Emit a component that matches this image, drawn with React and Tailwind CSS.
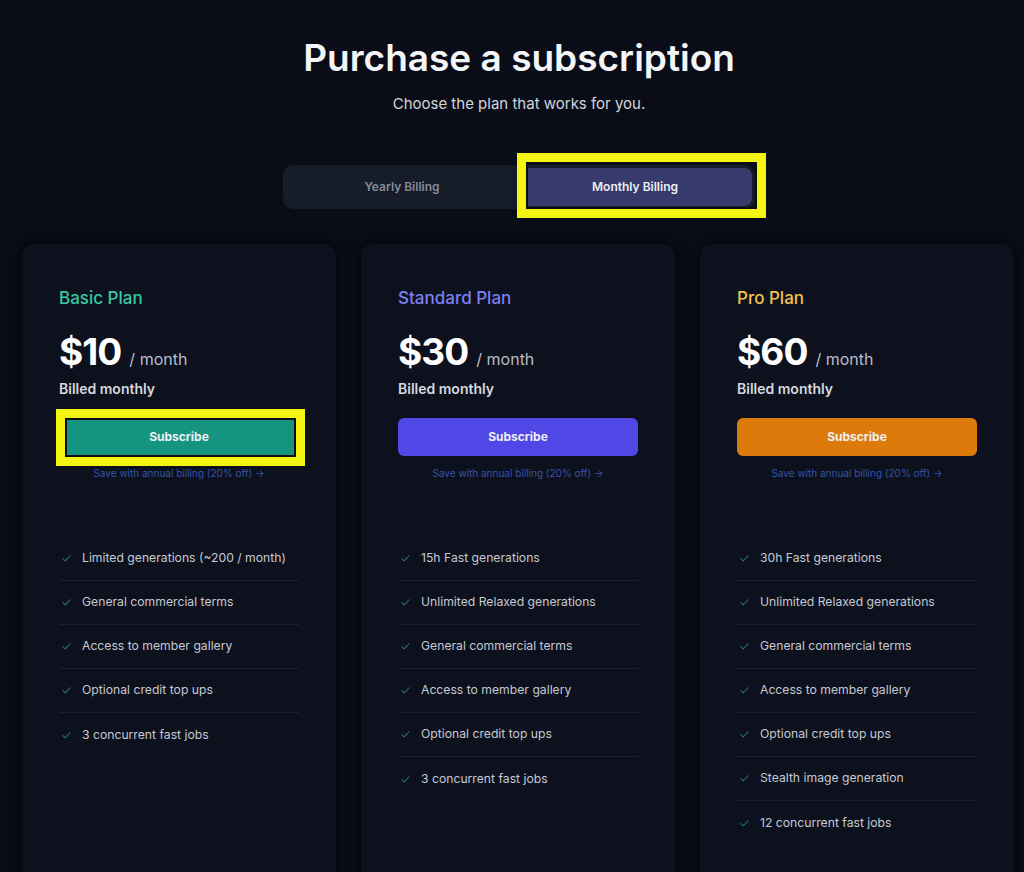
import { Check } from 'lucide-react';

const plans = [
  {
    name: 'Basic Plan',
    price: '$10',
    nameColor: 'text-[#36c9a3]',
    button: 'bg-[#15957f]',
    highlight: true,
    features: [
      'Limited generations (~200 / month)',
      'General commercial terms',
      'Access to member gallery',
      'Optional credit top ups',
      '3 concurrent fast jobs',
    ],
  },
  {
    name: 'Standard Plan',
    price: '$30',
    nameColor: 'text-[#7f7ff2]',
    button: 'bg-[#5146e6]',
    features: [
      '15h Fast generations',
      'Unlimited Relaxed generations',
      'General commercial terms',
      'Access to member gallery',
      'Optional credit top ups',
      '3 concurrent fast jobs',
    ],
  },
  {
    name: 'Pro Plan',
    price: '$60',
    nameColor: 'text-[#f3c24a]',
    button: 'bg-[#dc7b0b]',
    features: [
      '30h Fast generations',
      'Unlimited Relaxed generations',
      'General commercial terms',
      'Access to member gallery',
      'Optional credit top ups',
      'Stealth image generation',
      '12 concurrent fast jobs',
    ],
  },
];

// yellow annotation frame drawn over the screenshot
const Marker = ({ className }) => (
  <div
    className={`pointer-events-none absolute border-[9px] border-[#f4f412] shadow-[inset_0_0_0_2px_#0b0d10] ${className}`}
  />
);

function PlanCard({ plan }) {
  return (
    <div className="w-[314px] h-[640px] flex-shrink-0 rounded-xl bg-[#0d111e] shadow-[0_0_14px_rgba(0,0,0,0.7)] px-[37px] pt-[42px]">
      <p className={`text-[17px] leading-6 font-medium ${plan.nameColor}`}>{plan.name}</p>

      <div className="mt-[22px] flex items-baseline gap-2">
        <span className="text-[37px] leading-[40px] font-bold text-white tracking-tight">{plan.price}</span>
        <span className="text-[16px] text-[#b9bcc8]">/ month</span>
      </div>

      <p className="mt-[7px] text-[14px] leading-5 font-semibold text-[#d6d8df]">Billed monthly</p>

      <div className="relative mt-[19px]">
        <button
          className={`w-full h-[38px] rounded-md text-[12px] font-bold text-[#eef0f4] ${plan.button}`}
        >
          Subscribe
        </button>
        {plan.highlight && <Marker className="-left-[3px] -right-[6px] -top-[9px] -bottom-[10px]" />}
      </div>

      <p className="mt-[10px] text-center text-[10px] leading-[14px] text-[#3653a8]">
        Save with annual billing (20% off) →
      </p>

      <ul className="mt-[57px]">
        {plan.features.map((f, i) => (
          <li
            key={f}
            className={`h-11 flex items-center gap-[10px] ${
              i < plan.features.length - 1 ? 'border-b border-[#1b2131]' : ''
            }`}
          >
            <Check size={11} strokeWidth={2.2} className="ml-[2px] text-[#2a7d6b] flex-shrink-0" />
            <span className="text-[12.2px] whitespace-nowrap text-[#c6c9d2]">{f}</span>
          </li>
        ))}
      </ul>
    </div>
  );
}

export default function App() {
  return (
    <div
      className="w-[1024px] h-[872px] overflow-hidden bg-[#0a0d17]"
      style={{ fontFamily: 'Inter, "Noto Sans", sans-serif' }}
    >
      <div className="pt-[36px] pl-[14px] flex flex-col items-center">
        <h1 className="text-[37px] leading-[44px] font-semibold text-[#f4f5f7]">
          Purchase a subscription
        </h1>
        <p className="mt-[14px] text-[15px] leading-5 text-[#d3d5dc]">Choose the plan that works for you.</p>

        {/* billing toggle */}
        <div className="mt-[51px] w-[472px] h-[44px] rounded-[10px] bg-[#171c29] p-[3px] flex">
          <button className="flex-1 text-[12px] font-semibold text-[#858a9b]">Yearly Billing</button>
          <div className="relative w-[234px]">
            <button className="w-full h-full rounded-lg bg-[#363b6c] text-[12px] font-semibold text-[#eceef6]">
              Monthly Billing
            </button>
            <Marker className="-left-[1px] -right-[14px] -top-[15px] -bottom-[12px]" />
          </div>
        </div>
      </div>

      <div className="mt-[35px] pl-[22px] flex gap-[25px]">
        {plans.map((p) => (
          <PlanCard key={p.name} plan={p} />
        ))}
      </div>
    </div>
  );
}
